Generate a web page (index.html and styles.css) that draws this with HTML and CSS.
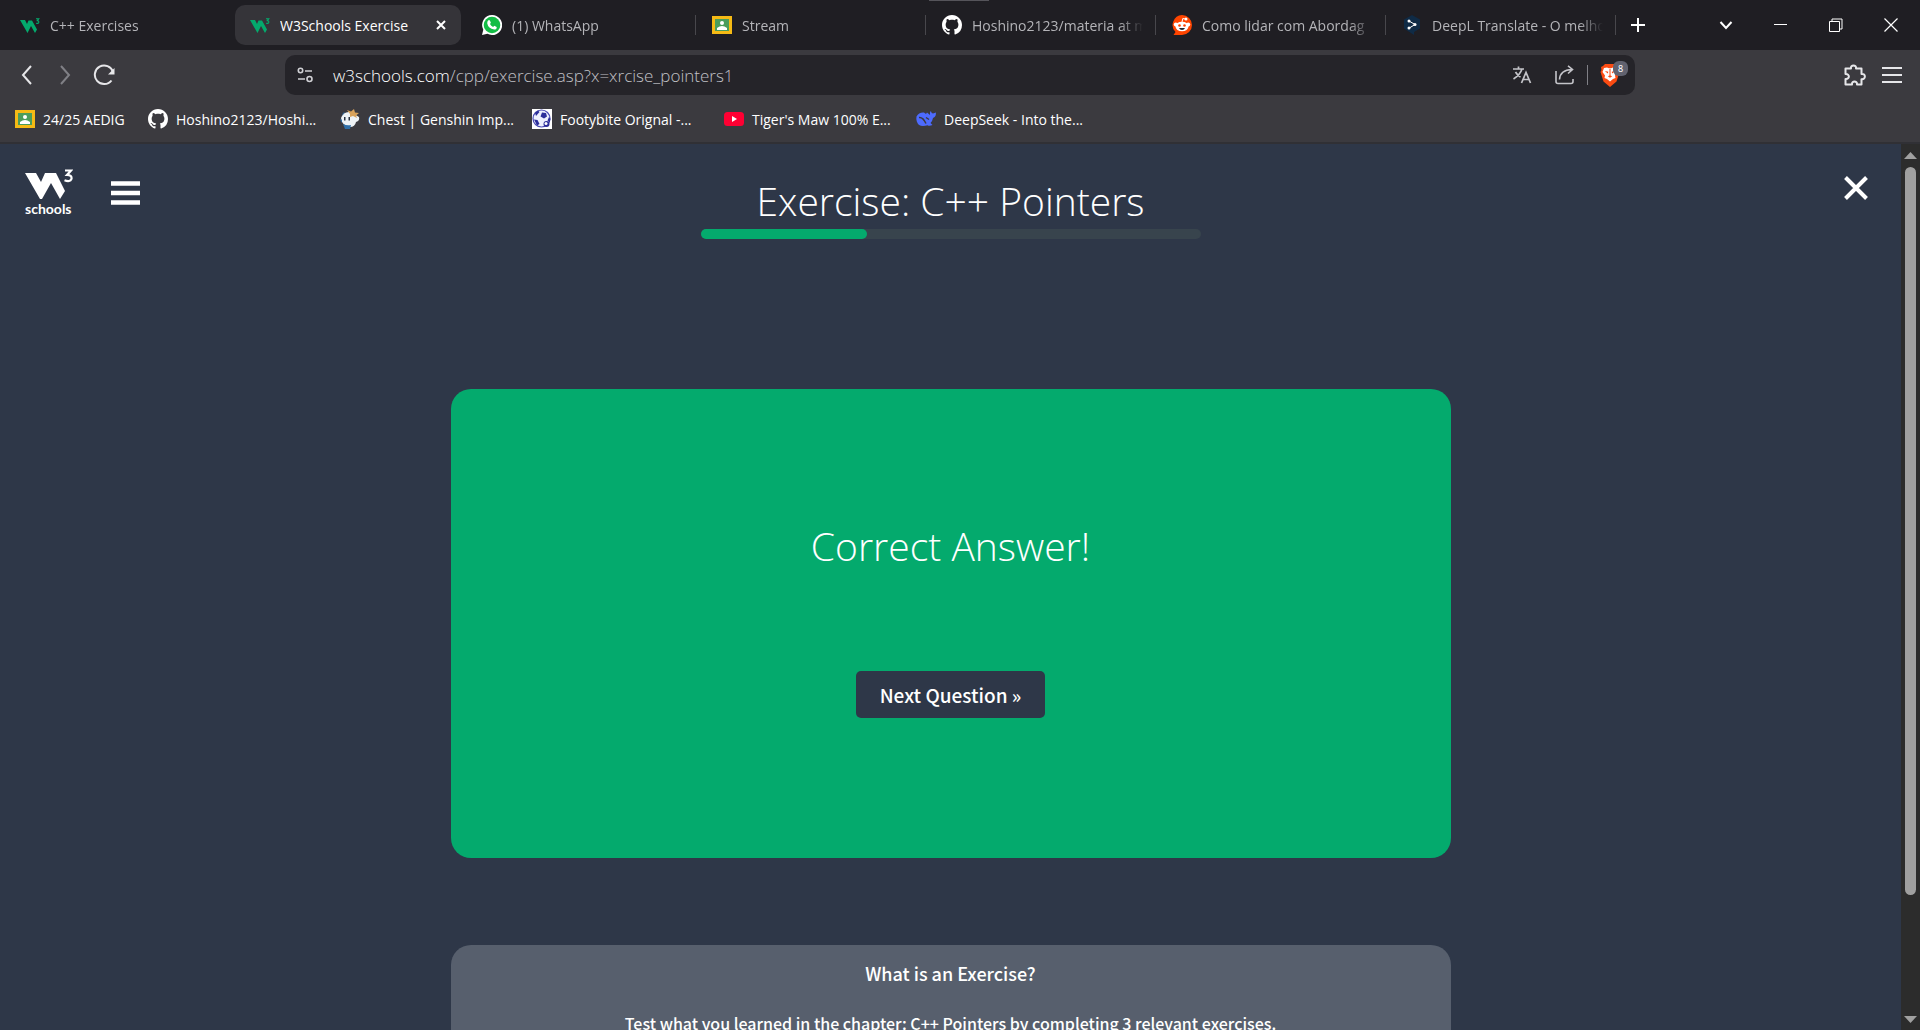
FILE: index.html
```html
<!DOCTYPE html>
<html lang="en">
<head>
<meta charset="utf-8">
<title>W3Schools Exercise</title>
<link rel="stylesheet" href="styles.css">
</head>
<body>
<svg class="defs" aria-hidden="true">
  <symbol id="w3" viewBox="0 0 20 20"><path d="M0 5h5l2 4 1.500-3.500H12l5 9L15 18l-4-7-3.500 7z" fill="#04aa6d"/><path d="M16 3.700h2.800L17.300 5.600q1.700.2 1.500 1.700-.4 1.600-2.600.9" fill="none" stroke="#04aa6d" stroke-width="1.100"/></symbol>
  <symbol id="github" viewBox="0 0 16 16"><path fill="#fff" d="M8 0C3.580 0 0 3.580 0 8c0 3.540 2.290 6.530 5.470 7.590.4.070.55-.17.55-.38 0-.19-.01-.82-.01-1.490-2.010.37-2.530-.49-2.690-.94-.09-.23-.48-.94-.82-1.130-.28-.15-.68-.52-.01-.53.63-.01 1.080.58 1.230.82.72 1.210 1.870.87 2.330.66.070-.52.28-.87.51-1.070-1.780-.2-3.640-.89-3.640-3.950 0-.87.31-1.590.82-2.150-.08-.2-.36-1.020.08-2.120 0 0 .67-.21 2.200.82.640-.18 1.320-.27 2-.27s1.360.09 2 .27c1.530-1.040 2.200-.82 2.200-.82.44 1.100.16 1.920.08 2.120.51.56.82 1.270.82 2.150 0 3.070-1.870 3.750-3.650 3.950.29.25.54.73.54 1.480 0 1.070-.01 1.930-.01 2.200 0 .21.15.46.55.38A8.010 8.010 0 0 0 16 8c0-4.420-3.580-8-8-8z"/></symbol>
  <symbol id="classroom" viewBox="0 0 20 20"><path fill="#f5ba15" d="M0 1h20v18H0z"/><path fill="#4b9d5b" d="M3 4h14v12H3z"/><circle cx="10" cy="8" r="2" fill="#fff"/><path fill="#fff" d="M5 15v-2q5-4 10 0v2z"/></symbol>
</svg>

<header class="browser">
  <nav class="tabs" aria-label="Tabs">
    <a class="tab" href="#"><svg class="fav"><use href="#w3"/></svg><span class="tab-title">C++ Exercises</span></a>
    <div class="tab tab-active"><svg class="fav"><use href="#w3"/></svg><span class="tab-title">W3Schools Exercise</span>
      <button class="tab-close" aria-label="Close tab"><svg viewBox="0 0 10 10" width="10" height="10"><path d="M1 1l8 8M9 1L1 9" stroke="#fff" stroke-width="2"/></svg></button></div>
    <a class="tab tab-divided" href="#"><svg class="fav" viewBox="0 0 20 20"><path fill="#fff" d="M10 0a10 10 0 1 1-4.600 18.800L0 20l1.300-5.200A10 10 0 0 1 10 0z"/><circle cx="10" cy="10" r="8.300" fill="#13bd45"/><path fill="#fff" d="M6.300 5.300h1.500l1.100 2.500-.9 1.300q1 2 3.100 2.900l1.200-1.300 2.400 1.200q.1 2.600-2.500 2.700Q6.200 13.800 5.200 8.300q0-2 1.100-3z"/></svg><span class="tab-title">(1) WhatsApp</span></a>
    <a class="tab tab-divided" href="#"><svg class="fav"><use href="#classroom"/></svg><span class="tab-title">Stream</span></a>
    <a class="tab tab-divided" href="#"><svg class="fav"><use href="#github"/></svg><span class="tab-title">Hoshino2123/materia at m</span></a>
    <a class="tab tab-divided" href="#"><svg class="fav" viewBox="0 0 20 20"><path fill="#ff4500" d="M10 0a10 10 0 1 1 0 20H1.500l2-3A10 10 0 0 1 10 0z"/><g fill="#fff"><ellipse cx="10" cy="11.500" rx="6.500" ry="4.800"/><circle cx="3.800" cy="9.500" r="2"/><circle cx="16.200" cy="9.500" r="2"/><circle cx="14" cy="4" r="1.500"/></g><path d="M10 7l.8-3.500 3 .7" fill="none" stroke="#fff"/><g fill="#ff4500"><circle cx="7.500" cy="10.500" r="1.300"/><circle cx="12.500" cy="10.500" r="1.300"/></g><path fill="#23262d" d="M7 13h6q-.8 2-3 2t-3-2z"/></svg><span class="tab-title">Como lidar com Abordag</span></a>
    <a class="tab tab-divided" href="#"><svg class="fav" viewBox="0 0 20 20"><path fill="#0f2b46" d="M10 0l8 4.500v9L12 17v3l-3-2-7-4.500v-9z"/><path d="M7 6l6 3.500-6 3.700" fill="none" stroke="#fff"/><g fill="#fff"><circle cx="7" cy="6" r="1.500"/><circle cx="13" cy="9.500" r="1.500"/><circle cx="7" cy="13" r="1.500"/></g></svg><span class="tab-title">DeepL Translate - O melho</span></a>
    <button class="icon-btn new-tab" aria-label="New tab"><svg viewBox="0 0 14 14" width="14" height="14"><path d="M7 0v14M0 7h14" stroke="#fff" stroke-width="2"/></svg></button>
    <div class="window-controls">
      <button class="icon-btn" aria-label="Search tabs"><svg viewBox="0 0 14 14" width="14" height="14"><path d="M1.500 4L7 10l5.500-6" fill="none" stroke="#fff" stroke-width="2"/></svg></button>
      <button class="icon-btn" aria-label="Minimize"><svg viewBox="0 0 14 14" width="14" height="14"><path d="M0 6.500h13" stroke="#fff"/></svg></button>
      <button class="icon-btn" aria-label="Restore"><svg viewBox="0 0 14 14" width="14" height="14"><path d="M.5 3.500h10v10H.5zM3 3V1h10v10h-2" fill="none" stroke="#fff"/></svg></button>
      <button class="icon-btn" aria-label="Close"><svg viewBox="0 0 14 14" width="14" height="14"><path d="M.5.5l13 13M13.500.5l-13 13" stroke="#fff" stroke-width="1.200"/></svg></button>
    </div>
    <span class="top-handle"></span>
  </nav>

  <div class="toolbar">
    <div class="nav-buttons">
      <button class="icon-btn" aria-label="Back"><svg viewBox="0 0 20 20" width="20" height="20"><path d="M14 1L6 10l8 9" fill="none" stroke="#e6e6e9" stroke-width="2"/></svg></button>
      <button class="icon-btn" aria-label="Forward"><svg viewBox="0 0 20 20" width="20" height="20"><path d="M6 1l8 9-8 9" fill="none" stroke="#808086" stroke-width="2"/></svg></button>
      <button class="icon-btn" aria-label="Reload"><svg viewBox="0 0 22 22" width="22" height="22"><path d="M20 8a9.300 9.300 0 1 0-1.500 8.500" fill="none" stroke="#e6e6e9" stroke-width="2"/><path d="M21.500 4v6.500H15z" fill="#e6e6e9"/></svg></button>
    </div>
    <form class="address">
      <button type="button" class="icon-btn" aria-label="Site information"><svg viewBox="0 0 16 16" width="16" height="16" fill="none" stroke="#d0d0d4" stroke-width="1.600"><circle cx="3.500" cy="3.500" r="2.200"/><path d="M8 4h7M1 12h7"/><circle cx="12.500" cy="12" r="2.500"/></svg></button>
      <div class="url" role="textbox" contenteditable="true" spellcheck="false" aria-label="Address"><span class="host">w3schools.com</span>/cpp/exercise.asp?x=xrcise_pointers1</div>
      <button type="button" class="icon-btn" aria-label="Translate"><svg viewBox="0 0 20 20" width="20" height="20" fill="none" stroke="#c4c4c9" stroke-width="1.700"><path d="M1 4h11M6.500 1.500V4M10 4Q8 10 1.500 14M3.500 7q2 3.500 5 5M9.500 18L14 7.500 18.500 18M11 14.500h6"/></svg></button>
      <button type="button" class="icon-btn" aria-label="Share"><svg viewBox="0 0 20 20" width="20" height="20" fill="none" stroke="#c4c4c9" stroke-width="1.600"><path d="M1 6v10.500q0 2 2 2h13q2 0 2-2V14M4.500 14.500Q5 5 17 4.500M13 .8l4.500 3.700L13 8.500"/></svg></button>
      <span class="address-rule"></span>
      <button type="button" class="icon-btn shield" aria-label="Brave Shields"><svg viewBox="0 0 20 24" width="20" height="24"><path fill="#fb4b12" d="M5 1h10l2 2 2 1-.5 3 1 2-3 9.500L10 24l-6.500-5.500L.5 9l1-2L1 4l2-1z"/><path fill="#fff" d="M4 5l3-.5 2 .8h2l2-.8 3 .5 1.500 4-2.500 3.500.5 2.500-2.500 1L10 18.500 7 16l-2.500-1 .5-2.500L2.500 9z"/><path fill="#fb4b12" d="M4.800 8l3.500.8-.5 1.700zM15.200 8l-3.500.8.5 1.700zM9.500 6h1v6.500l1.700.8L10 14.800l-2.200-1.500 1.700-.8z"/></svg><span class="badge">8</span></button>
    </form>
    <div class="menu-buttons">
      <button class="icon-btn" aria-label="Extensions"><svg viewBox="0 0 22 22" width="22" height="22"><path d="M1.500 4.500h5.500C6 .5 13 .5 12 4.500h5.500V10c4.500-.8 4.500 6 0 5.200v5.300h-4.500c.5-4-5.500-4-5 0H1.500V15c4.500.5 4.500-5.500 0-5z" fill="none" stroke="#e6e6e9" stroke-width="2" stroke-linejoin="round"/></svg></button>
      <button class="icon-btn" aria-label="Menu"><svg viewBox="0 0 22 18" width="22" height="18"><path d="M1 2h20M1 9h20M1 16h20" stroke="#e6e6e9" stroke-width="2"/></svg></button>
    </div>
  </div>

  <nav class="bookmarks" aria-label="Bookmarks">
    <a class="bookmark bookmark-short" href="#"><svg class="fav"><use href="#classroom"/></svg><span>24/25 AEDIG</span></a>
    <a class="bookmark" href="#"><svg class="fav"><use href="#github"/></svg><span>Hoshino2123/Hoshi...</span></a>
    <a class="bookmark" href="#"><svg class="fav" viewBox="0 0 20 20"><path fill="#eef3f6" d="M1 9q2-6 8-6 3 0 5 2l5 3q1 4-3 5-1 5-6 5Q2 17 1 9z"/><path fill="#d8a25a" d="M7 1l4 1.500L14 0l1 3.500 4 .5-3 2.500L17 9l-4-2-3 1V5z"/><path fill="#2f6fa8" d="M3 15q4 2 8 1l-1 4H5z"/><path fill="#29323f" d="M4 8h1.500v3.500H4zM8.500 8H10v3.500H8.500z"/><path fill="#2f6fa8" d="M0 10l2 1-.5 3zM3 4l2-1-3 4z"/></svg><span>Chest | Genshin Imp...</span></a>
    <a class="bookmark" href="#"><svg class="fav" viewBox="0 0 20 20"><path fill="#fff" d="M0 0h20v20H0z"/><circle cx="9.500" cy="9.500" r="8.500" fill="#eef0ff" stroke="#4b4cb5" stroke-width="1.200"/><g fill="#2d2f9b"><path d="M10 3.500l4 .5 1 3.500-3 2-3.500-2zM3 4l3-2.500L7.500 3 4 7zM2 10.500l3.500.5L7.500 15 5 16.500zM17 8l1.500 2-1 3.500-2-2z"/><circle cx="14.500" cy="15" r="3"/></g><circle cx="14" cy="14.500" r="1.500" fill="#fff"/></svg><span>Footybite Orignal -...</span></a>
    <a class="bookmark" href="#"><svg class="fav" viewBox="0 0 20 20"><rect y="3" width="20" height="14" rx="3.500" fill="#ff0033"/><path fill="#fff" d="M8 7l5 3-5 3z"/></svg><span>Tiger's Maw 100% E...</span></a>
    <a class="bookmark" href="#"><svg class="fav" viewBox="0 0 20 20"><path fill="#4d6bfe" d="M.5 7.500Q3 3 8 3.500l2 1.500 1-1.500 3 2.500q-.5-3 .8-4 .8 2.500 2.200 2.500L20 3.500q0 4.500-3 5.500-.5 3-2.500 5l2 2q-3 1.500-5 .3Q3 19 .8 12.500q-.8-2.500-.3-5z"/><path d="M3 8.500q4-.5 7 6M10 8.500l3 2" fill="none" stroke="#3b3a3f" stroke-width="1.500"/></svg><span>DeepSeek - Into the...</span></a>
  </nav>
</header>

<div class="viewport">
  <main class="page">
    <div class="page-top">
      <div class="page-left">
        <a class="logo" href="#" aria-label="W3Schools home">
          <svg viewBox="0 0 48 30" width="48" height="30"><path fill="#fff" d="M0 4h11l5 9 4-9h11l9 18-5 8-9-16-9 16h-2z"/><path d="M40 1.500h6l-4 4.500q5 0 4.500 3.800-1.500 3.700-7 1.400" fill="none" stroke="#fff" stroke-width="2.200"/></svg>
          <span class="logo-text">schools</span>
        </a>
        <button class="icon-btn burger" aria-label="Menu"><svg viewBox="0 0 29 24" width="29" height="24"><path d="M0 2.500h29M0 12h29M0 21.500h29" stroke="#fff" stroke-width="4.500"/></svg></button>
      </div>
      <div class="heading">
        <h1 class="title">Exercise: C++ Pointers</h1>
        <div class="progress"><div class="progress-fill" style="width:33.300%"></div></div>
      </div>
      <div class="page-right">
        <button class="icon-btn" aria-label="Close exercise"><svg viewBox="0 0 24 24" width="24" height="24"><path d="M1.500 1.500l21 21M22.500 1.500l-21 21" stroke="#fff" stroke-width="4"/></svg></button>
      </div>
    </div>
    <section class="card answer">
      <h2 class="title">Correct Answer!</h2>
      <button class="next">Next Question »</button>
    </section>
    <section class="card about">
      <h3 class="about-title">What is an Exercise?</h3>
      <p class="about-text">Test what you learned in the chapter: C++ Pointers by completing 3 relevant exercises.</p>
    </section>
  </main>
  <div class="scrollbar" aria-hidden="true">
    <svg viewBox="0 0 13 7" width="13" height="7"><path d="M6.500 0L13 7H0z" fill="#a0a0a0"/></svg>
    <div class="track"><div class="thumb"></div></div>
    <svg viewBox="0 0 13 7" width="13" height="7"><path d="M0 0h13L6.500 7z" fill="#a0a0a0"/></svg>
  </div>
</div>
</body>
</html>
```
FILE: styles.css
```css
* { box-sizing: border-box; }
body {
  margin: 0;
  height: 100vh;
  display: flex;
  flex-direction: column;
  overflow: hidden;
  background: #2e3748;
  color: #fff;
  font-family: "Open Sans", "Noto Sans", sans-serif;
}
h1, h2, h3, p { margin: 0; }
a { color: inherit; text-decoration: none; }
svg { display: block; flex: none; }
.defs { position: absolute; width: 0; height: 0; }
.fav { width: 20px; height: 20px; flex: none; }
.icon-btn {
  display: flex;
  align-items: center;
  justify-content: center;
  flex: none;
  padding: 0;
  border: 0;
  background: none;
  color: inherit;
}

/* Browser chrome */
.browser { flex: none; background: #3b3a3f; border-bottom: 2px solid #303035; }
.tabs {
  position: relative;
  display: flex;
  align-items: center;
  gap: 4px;
  height: 50px;
  padding-left: 5px;
  background: #1f1e23;
}
.tab {
  position: relative;
  display: flex;
  align-items: center;
  gap: 10px;
  flex: 0 1 226px;
  min-width: 0;
  height: 40px;
  padding: 0 12px 0 15px;
  border-radius: 10px;
  color: #b4b4b8;
  font-size: 14px;
}
.tab-active { background: #353439; color: #fff; }
.tab-title {
  flex: 1;
  overflow: hidden;
  white-space: nowrap;
  mask-image: linear-gradient(to right, #000 calc(100% - 24px), transparent);
}
.tab-active .tab-title { mask-image: none; }
.tab-divided { padding: 0 8px 0 17px; }
.tab-divided::after {
  content: "";
  position: absolute;
  right: -5px;
  top: 10px;
  width: 1px;
  height: 20px;
  background: #48474c;
}
.tab-close { display: flex; padding: 3px; border: 0; background: none; }
.new-tab { width: 38px; height: 40px; margin-left: 4px; }
.window-controls { display: flex; gap: 41px; margin-left: auto; padding-right: 22px; }
.top-handle { position: absolute; top: 0; left: 929px; width: 60px; height: 1px; background: #55545a; }

.toolbar {
  display: grid;
  grid-template-columns: 285px minmax(0, 1350px) minmax(100px, 1fr);
  align-items: center;
  height: 50px;
}
.nav-buttons { display: flex; align-items: center; gap: 18px; padding-left: 17px; }
.address {
  display: flex;
  align-items: center;
  height: 40px;
  padding: 0 15px 0 12px;
  border-radius: 10px;
  background: #252429;
  gap: 12px;
}
.url { flex: 1; padding-left: 8px; color: #c0c0c5; font-size: 17px; font-weight: 300; white-space: nowrap; }
.host { color: #fff; }
.address .icon-btn + .icon-btn { margin-left: 11px; }
.address-rule { width: 1px; height: 20px; background: #808086; }
.shield { position: relative; }
.badge {
  position: absolute;
  left: 13px;
  top: -2px;
  width: 15px;
  height: 15px;
  border-radius: 6px;
  background: #61626f;
  font: 9px/15px "Noto Sans", sans-serif;
}
.menu-buttons { display: flex; align-items: center; justify-content: flex-end; gap: 15px; padding-right: 17px; }

.bookmarks { display: flex; align-items: center; gap: 20px; height: 42px; padding: 0 15px 4px; font-size: 14px; }
.bookmark { display: flex; align-items: center; gap: 8px; width: 172px; white-space: nowrap; }
.bookmark-short { width: 113px; }

/* Page */
.viewport { flex: 1; min-height: 0; display: flex; }
.page { flex: 1; min-width: 0; overflow: hidden; }
.page-top {
  display: grid;
  grid-template-columns: 1fr minmax(0, 500px) 1fr;
  padding: 25px 25px 0;
}
.page-left { display: flex; gap: 38px; }
.page-right { display: flex; justify-content: flex-end; align-items: flex-start; padding: 7px 8px 0 0; }
.logo { display: flex; flex-direction: column; width: 48px; height: 48px; }
.logo-text { font: 700 14px/20px "Lato", sans-serif; }
.burger { height: 48px; }
.heading { display: flex; flex-direction: column; gap: 3px; padding-top: 7px; }
.title { font-size: 39px; line-height: 50px; font-weight: 300; text-align: center; white-space: nowrap; }
.progress { height: 10px; border-radius: 5px; background: #38444d; }
.progress-fill { height: 10px; border-radius: 5px; background: #04aa6d; }
.card { max-width: 1000px; margin: 0 auto; border-radius: 20px; text-align: center; }
.answer {
  display: flex;
  flex-direction: column;
  align-items: center;
  gap: 100px;
  margin-top: 150px;
  padding: 132px 20px 140px;
  background: #04aa6d;
}
.next {
  height: 47px;
  padding: 0 24px;
  border: 0;
  border-radius: 5px;
  background: #2e3748;
  color: #fff;
  font: 500 19px/24px "Noto Sans CJK JP", sans-serif;
}
.about { margin-top: 87px; padding: 14px 20px 40px; background: #575f6d; font-family: "Noto Sans CJK JP", sans-serif; }
.about-title { font-size: 18px; line-height: 28px; font-weight: 500; }
.about-text { margin-top: 23px; font-size: 16px; line-height: 26px; font-weight: 500; }

.scrollbar { display: flex; flex-direction: column; align-items: center; width: 19px; padding: 8px 0 7px; background: #2c2c2c; }
.track { flex: 1; padding: 8px 0; }
.thumb { width: 11px; height: calc(87% - 4px); border-radius: 6px; background: #a0a0a0; }
```
